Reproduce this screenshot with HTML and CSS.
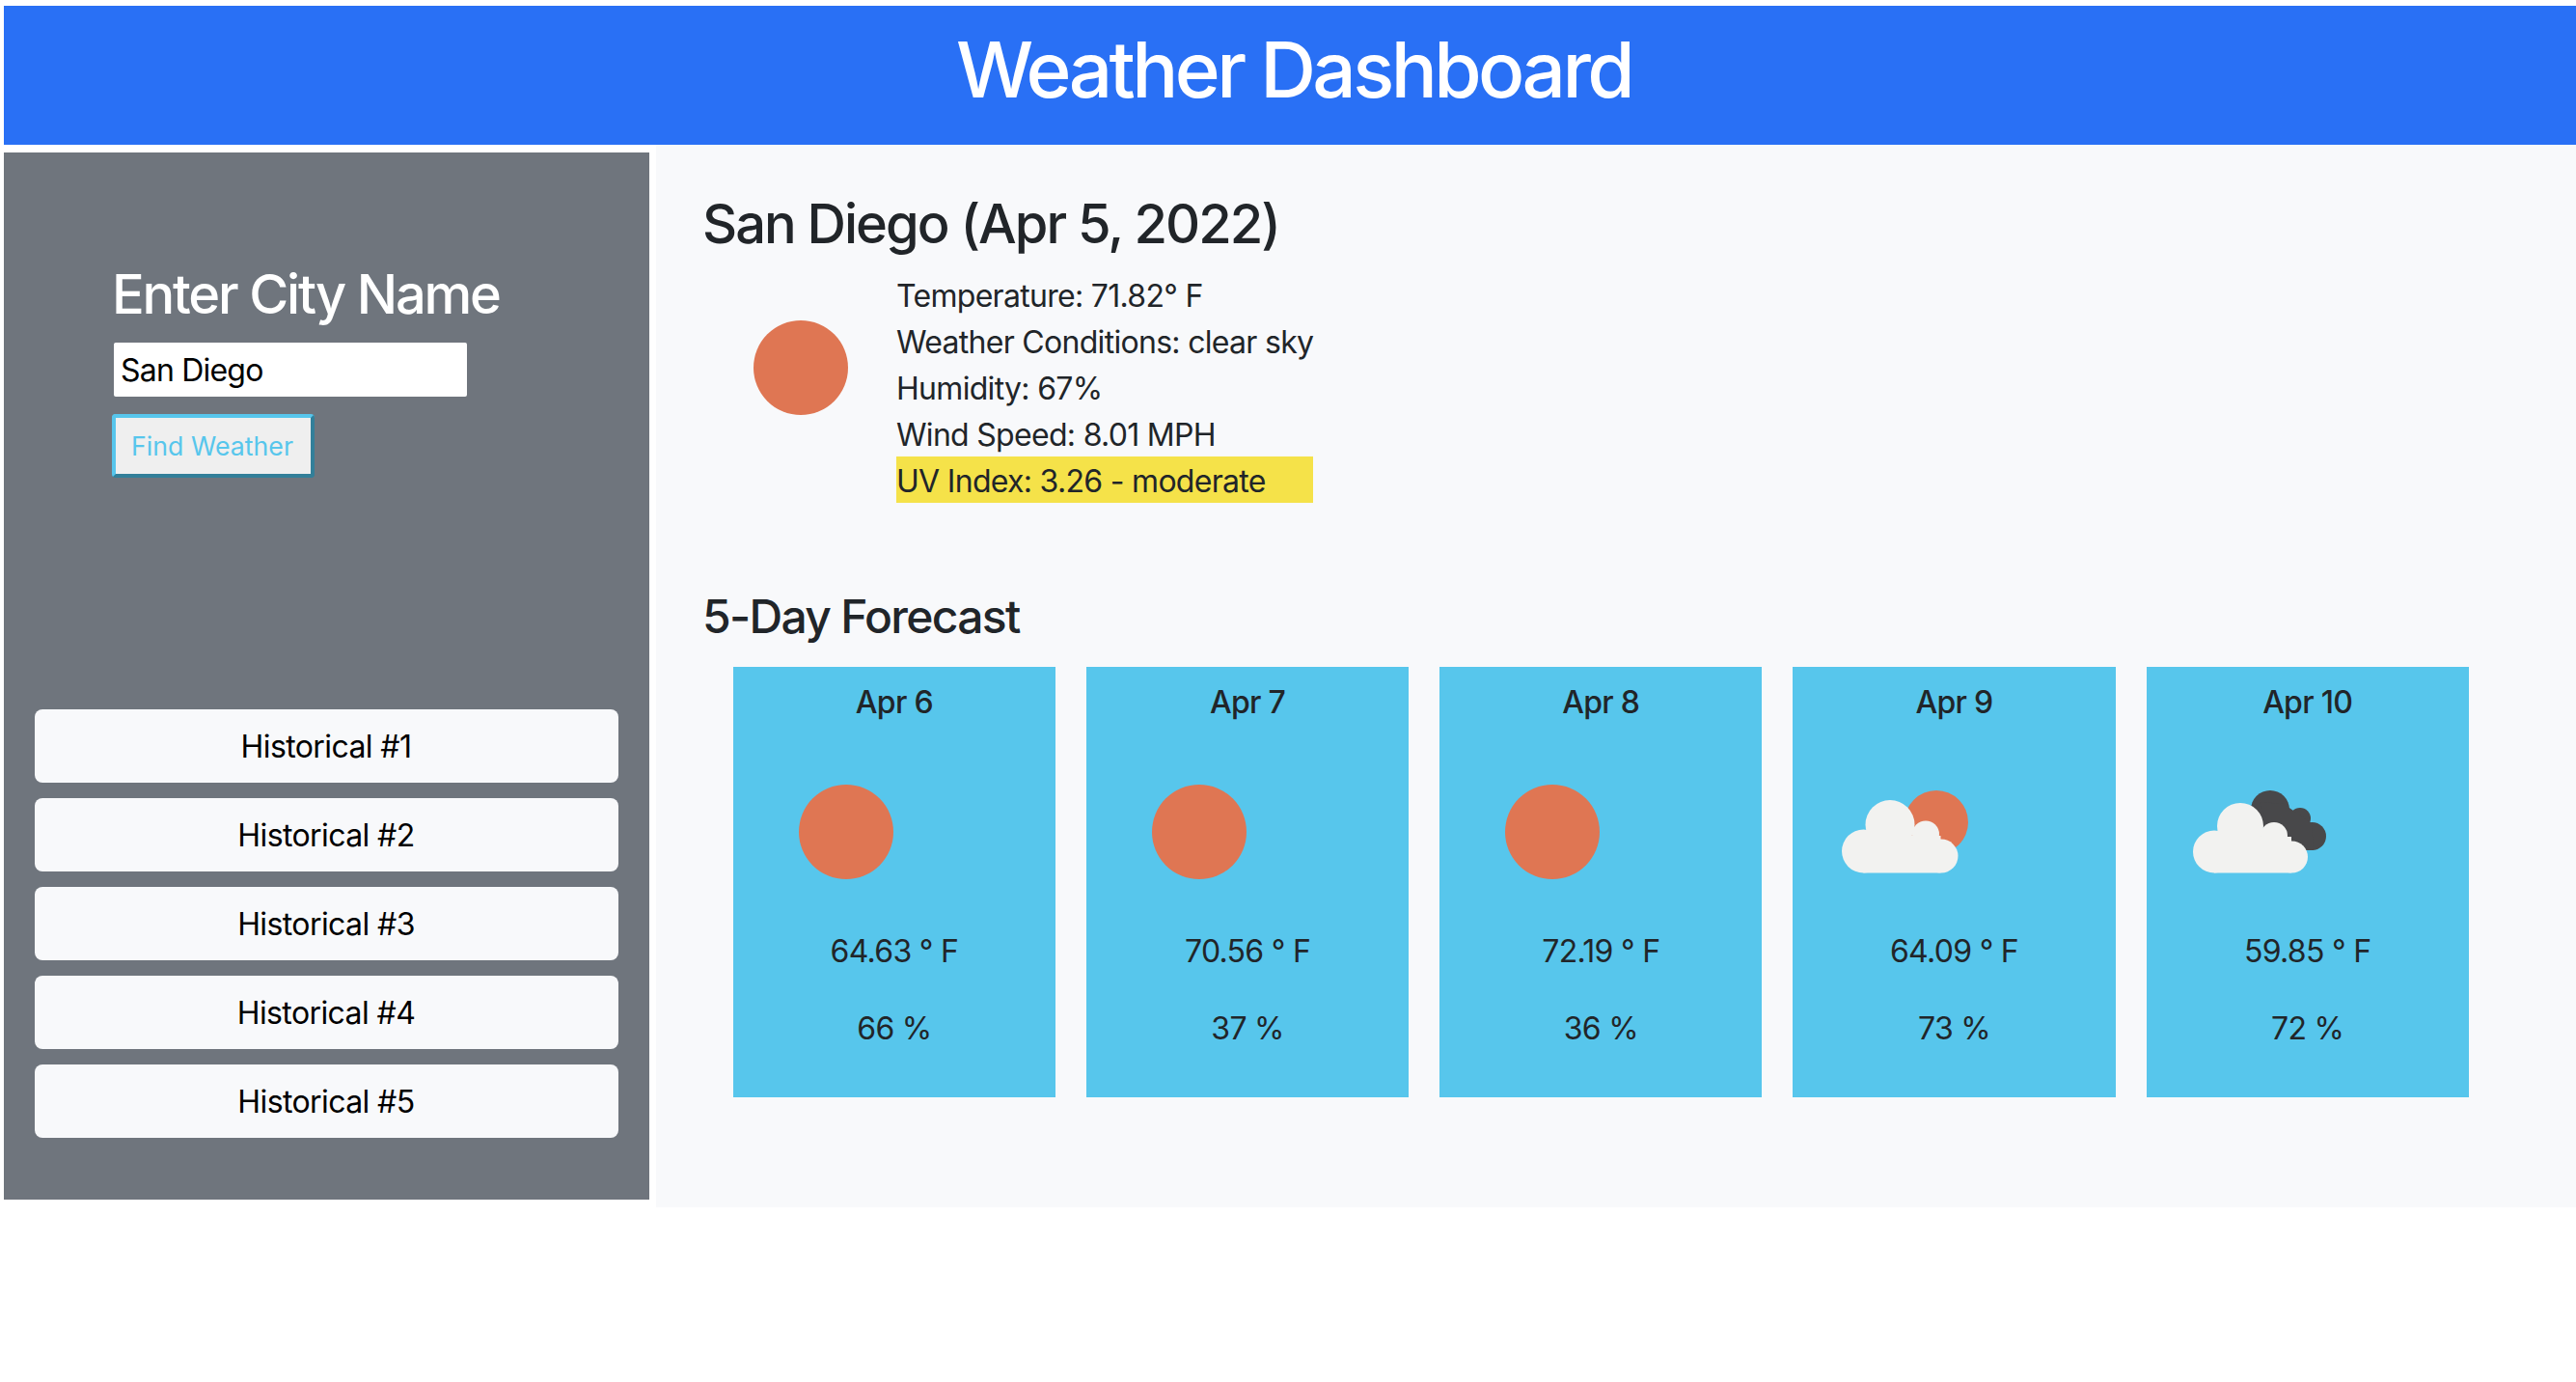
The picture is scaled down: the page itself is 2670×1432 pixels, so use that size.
FILE: index.html
```html
<!DOCTYPE html>
<html lang="en">
<head>
<meta charset="utf-8">
<title>Weather Dashboard</title>
<link rel="stylesheet" href="styles.css">
</head>
<body>
<svg class="defs" width="0" height="0" aria-hidden="true">
  <symbol id="sun" viewBox="0 0 200 200"><circle cx="100" cy="100" r="49" fill="#df7653"/></symbol>
  <symbol id="partly" viewBox="0 0 200 200">
    <circle cx="132" cy="90" r="33" fill="#df7653"/>
    <g fill="#f2f2f0"><circle cx="84" cy="92.5" r="25.5"/><circle cx="56.5" cy="120" r="22.5"/><circle cx="121" cy="102.5" r="14"/><circle cx="137" cy="125" r="17.5"/><rect x="56.5" y="104" width="80" height="38.5"/></g>
  </symbol>
  <symbol id="cloudy" viewBox="0 0 200 200">
    <g fill="#48484a"><circle cx="111" cy="77" r="20"/><circle cx="142" cy="86" r="11"/><circle cx="154.5" cy="104.5" r="14.5"/><polygon points="100,69 125,71 154,91 156,119 120,119"/></g>
    <g fill="#f2f2f0"><circle cx="80" cy="94" r="24"/><circle cx="53" cy="120.5" r="22"/><circle cx="115" cy="104" r="14"/><circle cx="133.5" cy="126" r="16.5"/><rect x="53" y="105" width="80" height="37.5"/></g>
  </symbol>
</svg>
<header class="top"><h1>Weather Dashboard</h1></header>
<div class="row">
  <aside class="side">
    <form class="search">
      <h3>Enter City Name</h3>
      <input class="city" type="text" value="San Diego">
      <button class="find" type="button">Find Weather</button>
    </form>
    <div class="history">
      <button class="hist" type="button">Historical #1</button>
      <button class="hist" type="button">Historical #2</button>
      <button class="hist" type="button">Historical #3</button>
      <button class="hist" type="button">Historical #4</button>
      <button class="hist" type="button">Historical #5</button>
    </div>
  </aside>
  <main class="main">
    <h2>San Diego (Apr 5, 2022)</h2>
    <section class="today">
      <svg class="icon"><use href="#sun"/></svg>
      <div class="facts">
        <p>Temperature: 71.82° F</p>
        <p>Weather Conditions: clear sky</p>
        <p>Humidity: 67%</p>
        <p>Wind Speed: 8.01 MPH</p>
        <p class="uv">UV Index: 3.26 - moderate</p>
      </div>
    </section>
    <h4>5-Day Forecast</h4>
    <section class="cards">
      <article class="card"><p class="date">Apr 6</p><svg class="icon"><use href="#sun"/></svg><p>64.63 ° F</p><p>66 %</p></article>
      <article class="card"><p class="date">Apr 7</p><svg class="icon"><use href="#sun"/></svg><p>70.56 ° F</p><p>37 %</p></article>
      <article class="card"><p class="date">Apr 8</p><svg class="icon"><use href="#sun"/></svg><p>72.19 ° F</p><p>36 %</p></article>
      <article class="card"><p class="date">Apr 9</p><svg class="icon"><use href="#partly"/></svg><p>64.09 ° F</p><p>73 %</p></article>
      <article class="card"><p class="date">Apr 10</p><svg class="icon"><use href="#cloudy"/></svg><p>59.85 ° F</p><p>72 %</p></article>
    </section>
  </main>
</div>
</body>
</html>
```
FILE: styles.css
```css
* { box-sizing: border-box; }
html, body { margin: 0; background: #fff; }
body {
  padding: 6px 0 0 4px;
  font-family: Inter, "Liberation Sans", sans-serif;
  font-size: 32px;
  line-height: 48px;
  color: #212529;
  letter-spacing: -0.7px;
}
.defs { position: absolute; }
p, h1, h2, h3, h4 { margin: 0; }
.top {
  height: 144px;
  background: #2970f5;
  color: #fff;
  text-align: center;
}
.top h1 { font-size: 80px; font-weight: 500; line-height: 132px; letter-spacing: -3.6px; padding-left: 8px; }
.row { display: flex; height: 1101px; }
.side {
  width: 669px;
  margin: 8px 7px 8px 0;
  background: #6f757d;
  padding: 113px 32px 64px;
  display: flex;
  flex-direction: column;
  justify-content: space-between;
}
.search { padding-left: 82px; display: flex; flex-direction: column; align-items: flex-start; }
.search h3 { font-size: 56px; font-weight: 500; line-height: 67px; color: #fff; margin: 1px 0 16px -2px; letter-spacing: -2.2px; }
.city {
  width: 366px;
  height: 56px;
  border: 0;
  border-radius: 2px;
  padding: 0 7px;
  background: #fff;
  color: #000;
  font: inherit;
  letter-spacing: -0.8px;
}
.find {
  margin: 18px 0 0 -2px;
  width: 210px;
  height: 66px;
  border: 4px solid;
  border-color: #57c6ec #337f99 #337f99 #57c6ec;
  border-radius: 4px;
  background: #efefef;
  color: #57c6ec;
  font-family: inherit;
  font-size: 26.67px;
  letter-spacing: 0.05px;
  padding: 0 2px 0 0;
}
.history { display: flex; flex-direction: column; gap: 16px; }
.hist {
  height: 76px;
  border: 0;
  border-radius: 8px;
  background: #f8f9fb;
  color: #000;
  font: inherit;
  letter-spacing: -0.6px;
  padding: 1px 1px 0 0;
}
.main { flex: 1; background: #f8f9fb; padding: 49px 0 0 48px; }
.main h2 { font-size: 56px; font-weight: 500; line-height: 67px; margin-bottom: 15px; letter-spacing: -2px; }
.today { display: flex; height: 329px; }
.icon { display: block; width: 200px; height: 200px; flex: none; filter: blur(0.6px); }
.today .icon { margin: 0 -1px 0 2px; }
.facts { width: 432px; white-space: nowrap; }
.facts p { height: 48px; padding-top: 2px; }
.uv { background: #f5e249; }
.main h4 { font-size: 48px; font-weight: 500; line-height: 58px; letter-spacing: -1.7px; }
.cards {
  margin: 23px 0 0 31.8px;
  width: 1799px;
  display: grid;
  grid-template-columns: repeat(5, 1fr);
  gap: 32px;
}
.card { background: #57c6ec; height: 446px; padding: 16px 0 0; text-align: center; }
.card .date { font-weight: 500; height: 48px; line-height: 42px; }
.card .icon { margin: 7px 0 0 17px; }
.card p + .icon + p { margin-bottom: 32px; }
```
